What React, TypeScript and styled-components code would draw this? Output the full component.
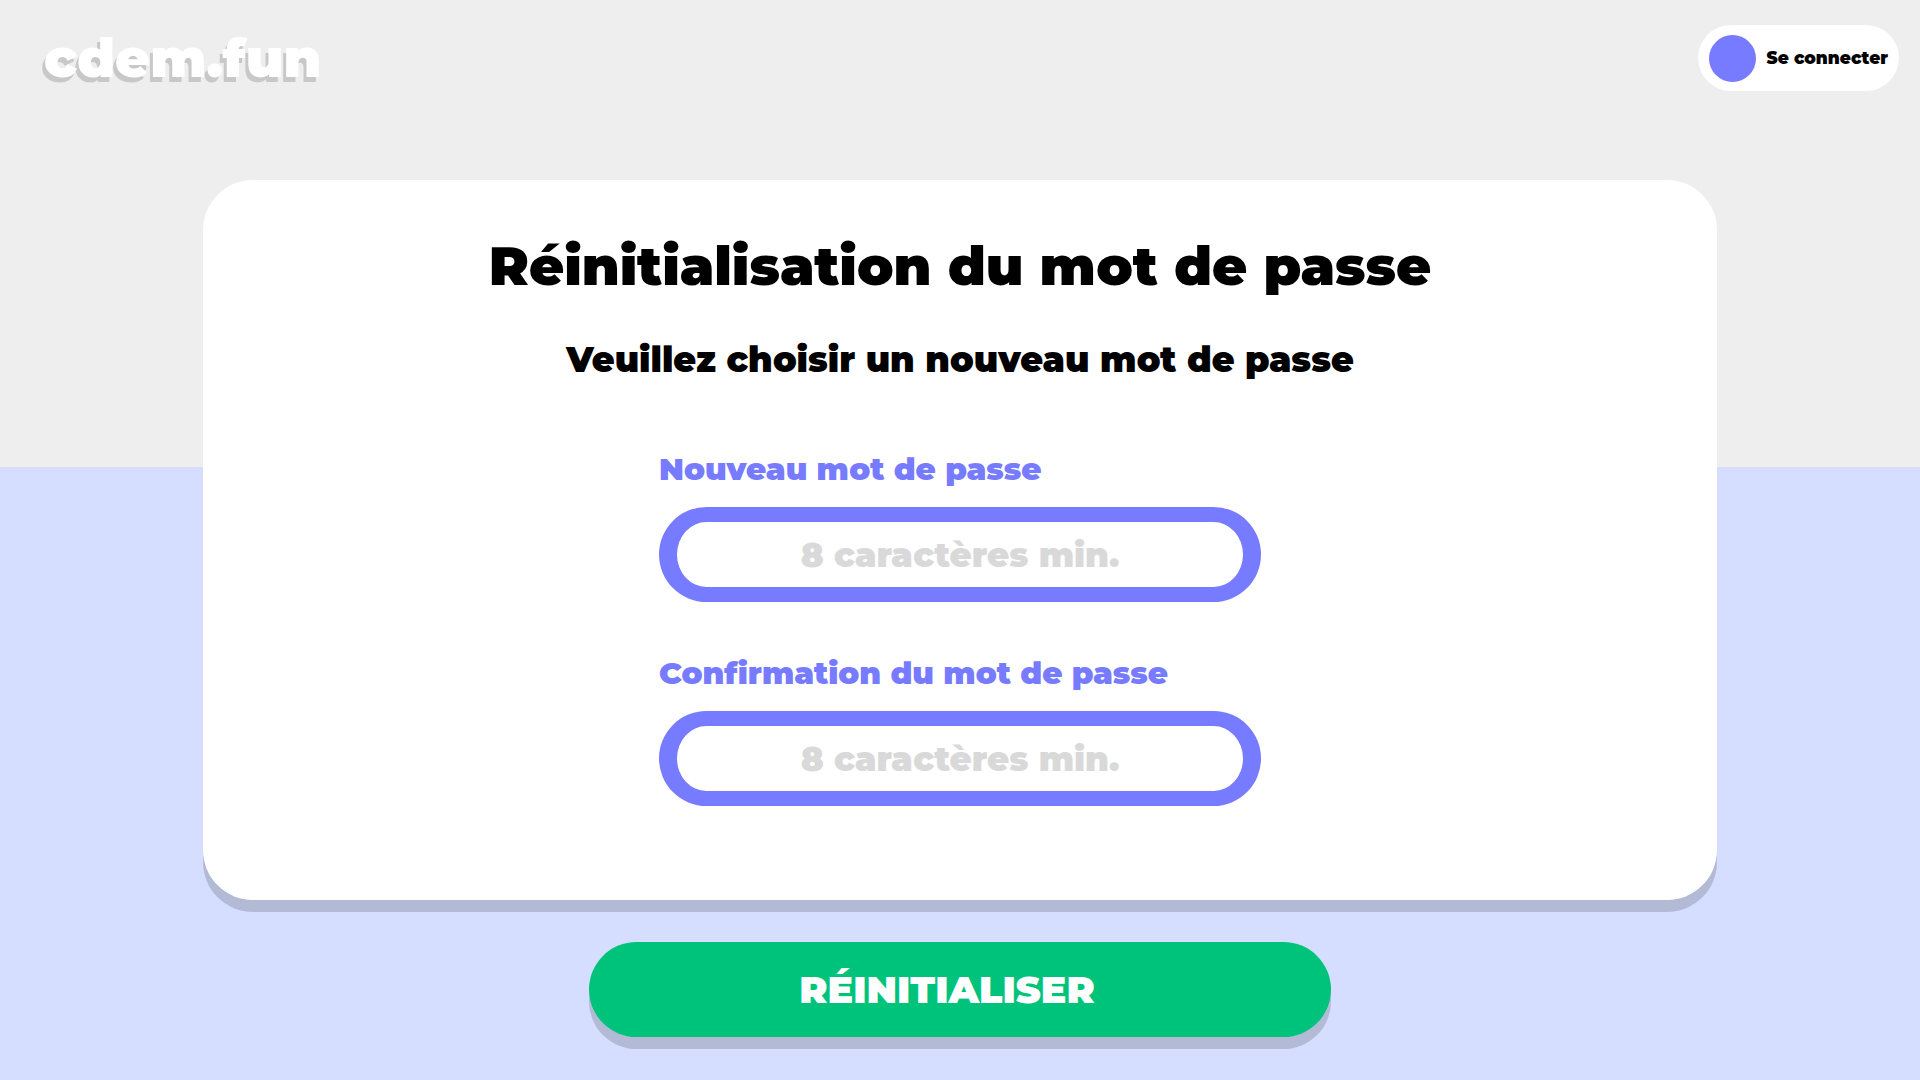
import React from "react";
import styled, { createGlobalStyle } from "styled-components";

const GlobalStyle = createGlobalStyle`
  *, *::before, *::after { box-sizing: border-box; }
  body {
    margin: 0;
    font-family: Montserrat, Inter, sans-serif;
    font-weight: 900;
  }
`;

const Page = styled.div`
  min-height: 100vh;
  background: linear-gradient(#eee 467px, #d6deff 467px);
`;

const Header = styled.header`
  display: flex;
  align-items: center;
  justify-content: space-between;
  padding: 25px 21px 0 44px;
`;

const Logo = styled.a`
  color: #fff;
  font-size: 54px;
  line-height: 66px;
  text-decoration: none;
  text-shadow: -3px 5px 0 #c8c8c8;
`;

const LoginButton = styled.button`
  display: flex;
  align-items: center;
  gap: 11px;
  height: 66px;
  padding: 0 11px;
  border: 0;
  border-radius: 33px;
  background: #fff;
  color: #000;
  font: inherit;
  font-size: 17px;
  line-height: 24px;
  cursor: pointer;
`;

const Avatar = styled.span`
  width: 47px;
  height: 47px;
  border-radius: 50%;
  background: #777bff;
`;

const Form = styled.form`
  display: flex;
  flex-direction: column;
  align-items: center;
  gap: 42px;
  padding: 89px 203px 43px;
`;

const Card = styled.section`
  display: flex;
  flex-direction: column;
  align-items: center;
  width: 100%;
  padding: 54px 40px 94px;
  border-radius: 50px;
  background: #fff;
  box-shadow: 0 12px 0 rgba(0, 0, 0, 0.16);
  text-align: center;
`;

const Title = styled.h1`
  margin: 0;
  font-size: 54px;
  line-height: 64px;
  font-weight: 900;
`;

const Subtitle = styled.h2`
  margin: 40px 0 0;
  font-size: 35px;
  line-height: 44px;
  font-weight: 900;
`;

const Fields = styled.div`
  display: flex;
  flex-direction: column;
  gap: 52px;
  width: 100%;
  max-width: 602px;
  margin-top: 68px;
`;

const Field = styled.div`
  display: flex;
  flex-direction: column;
  gap: 19px;
  text-align: left;
`;

const Label = styled.label`
  color: #777bff;
  font-size: 31px;
  line-height: 38px;
`;

const Input = styled.input`
  width: 100%;
  height: 95px;
  padding: 0 20px;
  border: solid #777bff;
  border-width: 15px 18px;
  border-radius: 48px;
  background: #fff;
  color: #000;
  font: inherit;
  font-size: 34px;
  text-align: center;
  outline: none;

  &::placeholder {
    color: #d9d9d9;
    opacity: 1;
  }
`;

const SubmitButton = styled.button`
  width: 100%;
  max-width: 742px;
  height: 95px;
  padding: 0 26px 0 0;
  border: 0;
  border-radius: 48px;
  background: #00c37b;
  box-shadow: 0 12px 0 rgba(0, 0, 0, 0.16);
  color: #fff;
  font: inherit;
  font-size: 38px;
  text-transform: uppercase;
  cursor: pointer;
`;

type PasswordFieldProps = { id: string; label: string };

function PasswordField({ id, label }: PasswordFieldProps) {
  return (
    <Field>
      <Label htmlFor={id}>{label}</Label>
      <Input
        id={id}
        name={id}
        type="password"
        minLength={8}
        autoComplete="new-password"
        placeholder="8 caractères min."
      />
    </Field>
  );
}

export default function App() {
  return (
    <Page>
      <GlobalStyle />
      <Header>
        <Logo href="/">cdem.fun</Logo>
        <LoginButton type="button">
          <Avatar />
          Se connecter
        </LoginButton>
      </Header>
      <main>
        <Form onSubmit={(event) => event.preventDefault()}>
          <Card>
            <Title>Réinitialisation du mot de passe</Title>
            <Subtitle>Veuillez choisir un nouveau mot de passe</Subtitle>
            <Fields>
              <PasswordField id="password" label="Nouveau mot de passe" />
              <PasswordField id="confirmation" label="Confirmation du mot de passe" />
            </Fields>
          </Card>
          <SubmitButton type="submit">Réinitialiser</SubmitButton>
        </Form>
      </main>
    </Page>
  );
}
